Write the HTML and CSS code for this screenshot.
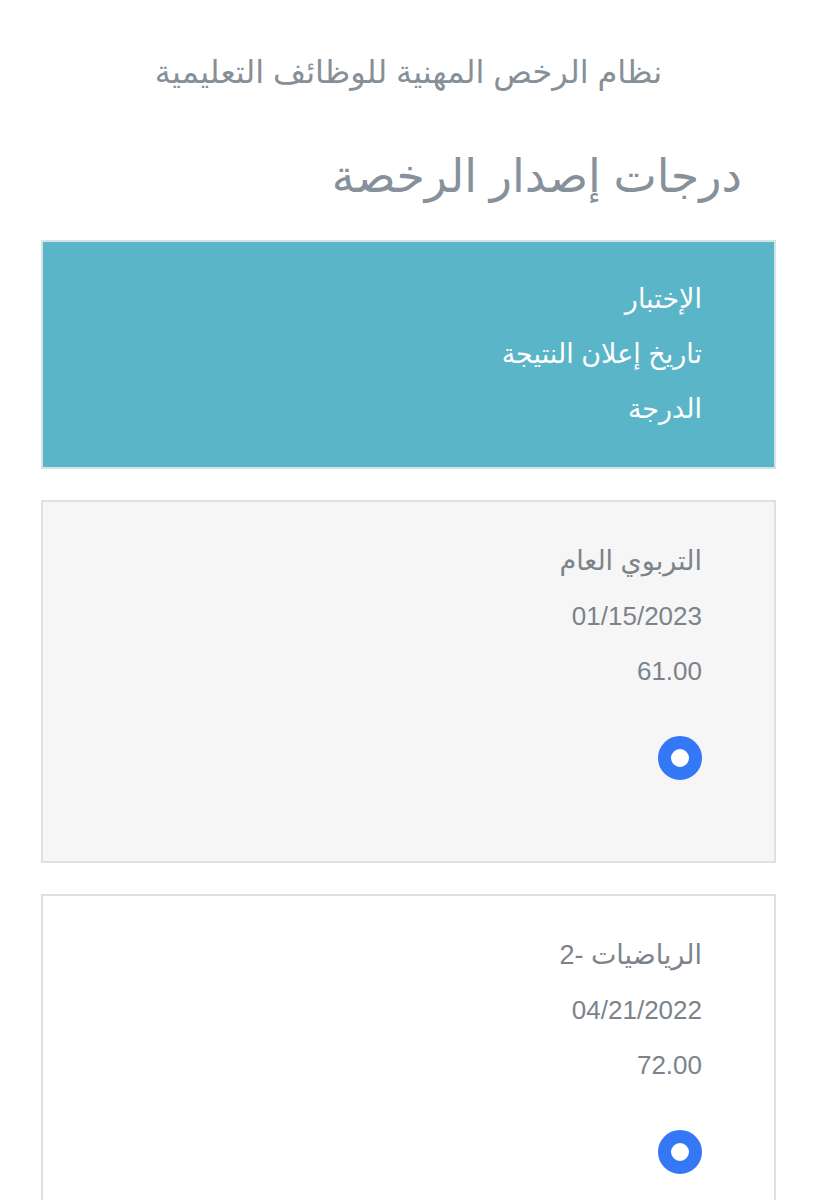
FILE: index.html
```html
<!DOCTYPE html>
<html lang="ar" dir="rtl">
<head>
<meta charset="utf-8">
<link rel="stylesheet" href="styles.css">
</head>
<body>
<div class="page">
  <p class="system">نظام الرخص المهنية للوظائف التعليمية</p>
  <h1 class="title">درجات إصدار الرخصة</h1>
  <div class="head-box">
    <div class="line">الإختبار</div>
    <div class="line">تاريخ إعلان النتيجة</div>
    <div class="line">الدرجة</div>
  </div>
  <div class="card card-grey">
    <div class="line ar">التربوي العام</div>
    <div class="line">01/15/2023</div>
    <div class="line">61.00</div>
    <div class="radio-row"><span class="radio"></span></div>
  </div>
  <div class="card card-white">
    <div class="line ar">الرياضيات -2</div>
    <div class="line">04/21/2022</div>
    <div class="line">72.00</div>
    <div class="radio-row"><span class="radio"></span></div>
  </div>
</div>
</body>
</html>
```
FILE: styles.css
```css
html, body {
  margin: 0;
  padding: 0;
  background: #ffffff;
}
body {
  font-family: "Liberation Sans", "DejaVu Sans", sans-serif;
  color: #7d838a;
}
.page {
  padding: 0 41px 40px 41px;
  display: flex;
  flex-direction: column;
}
.system {
  margin: 50px 0 0 0;
  text-align: center;
  font-size: 32px;
  line-height: 44px;
  color: #878f97;
}
.title {
  margin: 50px 34px 0 0;
  font-size: 46px;
  font-weight: normal;
  line-height: 64px;
  color: #87919b;
  text-align: right;
}
.head-box {
  margin-top: 32px;
  background: #5bb5c8;
  border: 2px solid #d5e3e8;
  padding: 30px 72px 30px 0;
  color: #ffffff;
}
.line {
  font-size: 27px;
  line-height: 55px;
  height: 55px;
}
.card {
  margin-top: 31px;
  border: 2px solid #dfe0e5;
  padding: 32px 72px 0 0;
  height: 327px;
}
.card .line {
  font-size: 26px;
  color: #7d838a;
}
.card .line.ar {
  font-size: 27px;
}
.card-grey {
  background: #f6f6f7;
}
.card-white {
  background: #ffffff;
}
.radio-row {
  display: flex;
  justify-content: flex-start;
  margin-top: 37px;
}
.radio {
  display: block;
  width: 44px;
  height: 44px;
  box-sizing: border-box;
  border-radius: 50%;
  border: 13px solid #3478f6;
  background: #ffffff;
}
```
